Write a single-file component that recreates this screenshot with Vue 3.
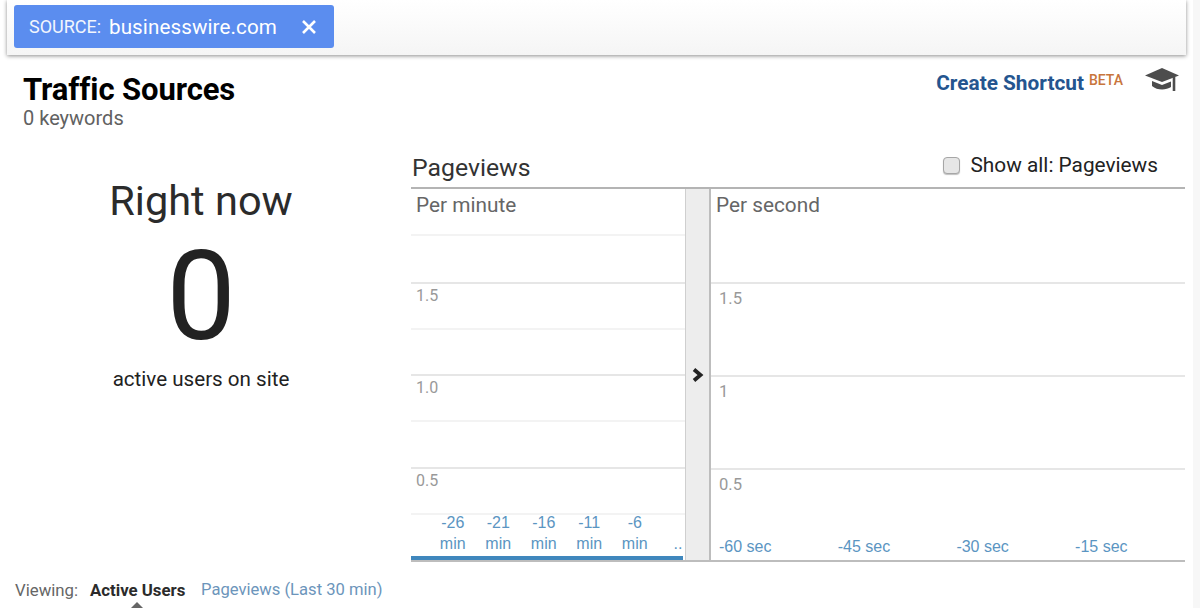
<template>
  <div class="page">
    <div class="topbar">
      <div class="source-tag">
        <span class="source-label">SOURCE:</span>
        <span class="source-value">businesswire.com</span>
        <svg class="close-icon" width="16" height="16" viewBox="0 0 16 16">
          <path d="M2 2 L14 14 M14 2 L2 14" stroke="#fff" stroke-width="2.6" fill="none" />
        </svg>
      </div>
    </div>

    <header class="head">
      <div>
        <h1>Traffic Sources</h1>
        <p class="keywords">0 keywords</p>
      </div>
      <div class="shortcut">
        <a class="shortcut-link">Create Shortcut</a>
        <span class="beta">BETA</span>
        <svg class="cap-icon" width="36" height="26" viewBox="0 0 36 26">
          <path d="M17 1 L34 8.5 L17 15 L0 8.5 Z" fill="#4d4d4d" />
          <path d="M7 14 L17 18 L26 14.5 L26 20 C21 23.5 12 23.5 7 19 Z" fill="#4d4d4d" />
          <path d="M29 10 L29 24" stroke="#4d4d4d" stroke-width="2.6" fill="none" />
        </svg>
      </div>
    </header>

    <main class="content">
      <section class="summary">
        <div class="right-now">Right now</div>
        <div class="big-number">0</div>
        <div class="active-users">active users on site</div>
      </section>

      <section class="charts">
        <div class="charts-head">
          <h2>Pageviews</h2>
          <label class="show-all">
            <span class="checkbox"></span>
            <span>Show all: Pageviews</span>
          </label>
        </div>

        <div class="chart-wrap">
          <div class="panel panel-minute">
            <div class="row row-title">Per minute</div>
            <div v-for="row in minuteRows" :key="row.id" class="row" :class="{ faint: row.faint }" :style="{ height: row.height + 'px' }">
              <span class="axis-label">{{ row.label }}</span>
            </div>
            <div class="minute-ticks">
              <div v-for="t in minuteTicks" :key="t" class="minute-tick">
                <span>{{ t }}</span>
                <span>min</span>
              </div>
              <div class="minute-more">..</div>
            </div>
            <div class="minute-bar"></div>
          </div>

          <div class="splitter">
            <svg width="12" height="14" viewBox="0 0 12 14">
              <path d="M2 1.5 L8.5 7 L2 12.5" stroke="#222" stroke-width="3.8" fill="none" />
            </svg>
          </div>

          <div class="panel panel-second">
            <div class="row sec-title">Per second</div>
            <div class="row sec-row"><span class="axis-label sec-label">1.5</span></div>
            <div class="row sec-row"><span class="axis-label sec-label">1</span></div>
            <div class="row sec-row sec-last">
              <span class="axis-label sec-label">0.5</span>
              <div class="sec-ticks">
                <span v-for="t in secondTicks" :key="t" class="sec-tick">{{ t }}</span>
              </div>
            </div>
          </div>
        </div>
      </section>
    </main>

    <footer class="viewing">
      <span class="viewing-label">Viewing:</span>
      <span class="viewing-active">Active Users</span>
      <a class="viewing-link">Pageviews (Last 30 min)</a>
    </footer>
  </div>
</template>

<script setup>
const minuteRows = [
  { id: 1, label: '', height: 48, faint: true },
  { id: 2, label: '1.5', height: 46 },
  { id: 3, label: '', height: 46, faint: true },
  { id: 4, label: '1.0', height: 46 },
  { id: 5, label: '', height: 47, faint: true },
  { id: 6, label: '0.5', height: 46 }
];

const minuteTicks = ['-26', '-21', '-16', '-11', '-6'];
const secondTicks = ['-60 sec', '-45 sec', '-30 sec', '-15 sec'];
</script>

<style>
html,
body {
  margin: 0;
  background: #fff;
}
</style>

<style scoped>
.page {
  width: 1200px;
  height: 608px;
  overflow: hidden;
  position: relative;
  background: #fff;
  font-family: Roboto, "Liberation Sans", sans-serif;
  color: #222;
}

/* faint strip along the right edge of the page */
.page::after {
  content: "";
  position: absolute;
  top: 0;
  right: 0;
  bottom: 0;
  width: 7px;
  background: #f7f7f7;
}

.topbar {
  box-sizing: border-box;
  width: 1179px;
  height: 55px;
  margin-left: 7px;
  padding: 5px 7px 0;
  background: linear-gradient(#fff, #f5f5f5);
  box-shadow: 0 1px 4px rgba(0, 0, 0, 0.45);
}

.source-tag {
  box-sizing: border-box;
  width: 320px;
  height: 43px;
  display: flex;
  align-items: center;
  padding-left: 15px;
  background: #5b8def;
  border-radius: 3px;
  color: #fff;
}

.source-label {
  font-size: 18px;
  width: 80px;
  opacity: 0.92;
}

.source-value {
  font-size: 20.6px;
  width: 192px;
  letter-spacing: 0.1px;
}

.close-icon {
  display: block;
}

.head {
  display: flex;
  justify-content: space-between;
  height: 77px;
  padding: 17px 19px 0 23px;
  box-sizing: border-box;
}

h1 {
  margin: 0;
  font-size: 31px;
  line-height: 36px;
  font-weight: 700;
  color: #000;
  letter-spacing: -0.1px;
}

.keywords {
  margin: -1px 0 0;
  font-size: 20px;
  line-height: 22px;
  color: #616161;
}

.shortcut {
  display: flex;
  align-items: flex-start;
}

.shortcut-link {
  font-size: 20.8px;
  line-height: 26px;
  margin-top: -2px;
  font-weight: 700;
  color: #24558f;
}

.beta {
  font-size: 14px;
  line-height: 16px;
  margin: 0 0 0 5px;
  font-weight: 500;
  color: #c8753c;
}

.cap-icon {
  margin: -5px 0 0 22px;
}

.content {
  display: flex;
}

.summary {
  width: 402px;
  display: flex;
  flex-direction: column;
  align-items: center;
  flex-shrink: 0;
}

.right-now {
  margin-top: 44px;
  font-size: 41.5px;
  line-height: 50px;
  color: #2b2b2b;
  font-weight: 400;
}

.big-number {
  font-size: 124px;
  line-height: 140px;
  font-weight: 400;
  color: #222;
  margin-top: 1px;
}

.active-users {
  margin-top: 0;
  font-size: 20.6px;
  line-height: 24px;
  color: #222;
}

.charts {
  margin-left: 9px;
  width: 774px;
}

.charts-head {
  height: 57px;
  box-sizing: border-box;
  display: flex;
  justify-content: space-between;
  align-items: flex-end;
  border-bottom: 2px solid #b4b4b4;
  padding: 0 27px 4px 1px;
}

h2 {
  margin: 0;
  font-size: 24.8px;
  line-height: 30px;
  font-weight: 400;
  color: #333;
}

.show-all {
  display: flex;
  align-items: center;
  gap: 11px;
  font-size: 20.8px;
  line-height: 26px;
  color: #222;
  margin-bottom: 5px;
}

.checkbox {
  box-sizing: border-box;
  width: 17px;
  height: 17px;
  border: 1.5px solid #a6a6a6;
  border-radius: 4px;
  background: #e6e6e6;
  box-shadow: 0 1px 1px rgba(0, 0, 0, 0.25);
}

.chart-wrap {
  display: flex;
  height: 371px;
  border-bottom: 2px solid #bdbdbd;
}

.panel-minute {
  width: 274px;
  flex-shrink: 0;
  display: flex;
  flex-direction: column;
}

.panel-second {
  flex: 1;
  min-width: 0;
  display: flex;
  flex-direction: column;
}

.row {
  box-sizing: border-box;
  border-top: 2px solid #e6e6e6;
  flex-shrink: 0;
}

.row.faint {
  border-top: 2px solid #f3f3f3;
}

.row-title {
  border-top: none;
  height: 45px;
  padding: 3px 0 0 5px;
  font-size: 20.8px;
  line-height: 26px;
  color: #666;
}

.axis-label {
  display: block;
  padding: 3px 0 0 5px;
  font-size: 16px;
  line-height: 18px;
  color: #999;
}

.minute-ticks {
  flex: 1;
  min-height: 0;
  box-sizing: border-box;
  border-top: 2px solid #f3f3f3;
  display: flex;
  padding: 0 2px 0 19px;
  font-family: "Liberation Sans", Arial, sans-serif;
}

.minute-tick {
  width: 45.5px;
  margin-top: -3px;
  display: flex;
  flex-direction: column;
  align-items: center;
  font-size: 16px;
  line-height: 21px;
  color: #5b95c2;
}

.minute-more {
  margin-left: 16px;
  margin-top: 18px;
  font-size: 16px;
  line-height: 21px;
  color: #5b95c2;
}

.minute-bar {
  flex-shrink: 0;
  width: 272px;
  height: 4px;
  background: #3f87bd;
}

.splitter {
  box-sizing: border-box;
  width: 26px;
  flex-shrink: 0;
  display: flex;
  align-items: center;
  justify-content: center;
  background: #ededed;
  border-left: 1px solid #cfcfcf;
  border-right: 2px solid #bdbdbd;
}

.sec-title {
  border-top: none;
  height: 93px;
  padding: 3px 0 0 5px;
  font-size: 20.8px;
  line-height: 26px;
  color: #666;
}

.sec-row {
  height: 93px;
}

.sec-last {
  flex: 1;
  height: auto;
}

.sec-label {
  padding: 5px 0 0 8px;
  font-size: 16.6px;
  line-height: 20px;
}

.sec-ticks {
  display: flex;
  padding: 42px 0 0 8px;
  font-family: "Liberation Sans", Arial, sans-serif;
}

.sec-tick {
  width: 118.7px;
  flex-shrink: 0;
  font-size: 16px;
  line-height: 20px;
  color: #5b95c2;
}

.viewing {
  display: flex;
  align-items: center;
  position: absolute;
  left: 15px;
  top: 579px;
  font-size: 16.8px;
  line-height: 22px;
}

.viewing-label {
  color: #666;
  width: 75px;
}

.viewing-active {
  font-weight: 700;
  color: #2b2b2b;
  width: 111px;
  position: relative;
}

.viewing-active::after {
  content: "";
  position: absolute;
  left: 40px;
  top: 23px;
  width: 0;
  height: 0;
  border-left: 7px solid transparent;
  border-right: 7px solid transparent;
  border-bottom: 7px solid #666;
}

.viewing-link {
  color: #6c95bb;
  font-size: 16.6px;
}
</style>
